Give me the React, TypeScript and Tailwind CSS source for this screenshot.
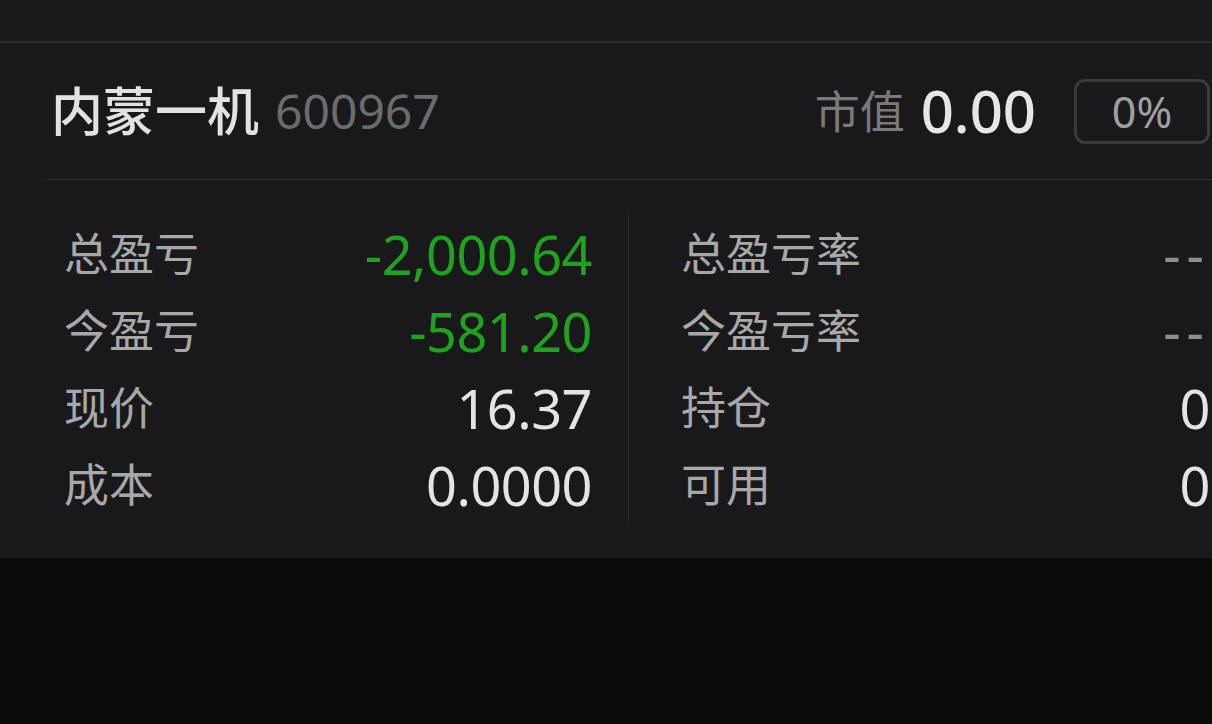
import React from "react";

const font = { fontFamily: '"Noto Sans", "Noto Sans CJK SC", sans-serif' };

type Row = { label: string; value: string; tone: "green" | "white" | "dim" };

const left: Row[] = [
  { label: "总盈亏", value: "-2,000.64", tone: "green" },
  { label: "今盈亏", value: "-581.20", tone: "green" },
  { label: "现价", value: "16.37", tone: "white" },
  { label: "成本", value: "0.0000", tone: "white" },
];

const right: Row[] = [
  { label: "总盈亏率", value: "--", tone: "dim" },
  { label: "今盈亏率", value: "--", tone: "dim" },
  { label: "持仓", value: "0", tone: "white" },
  { label: "可用", value: "0", tone: "white" },
];

const toneClass = {
  green: "text-[#1fa31f] tracking-[-0.5px]",
  white: "text-[#e4e4e4] tracking-[-0.5px]",
  dim: "text-[#8e8e8e] tracking-[6px]",
};

function StatRow({ row }: { row: Row }) {
  return (
    <div className="h-[77px] flex items-center justify-between">
      <span className="text-[45px] leading-none text-[#a8a8a8]">{row.label}</span>
      <span className={`text-[54px] leading-none ${toneClass[row.tone]}`}>{row.value}</span>
    </div>
  );
}

export default function App() {
  return (
    <div className="w-[1212px] h-[724px] bg-[#0b0b0b] overflow-hidden" style={font}>
      {/* top strip */}
      <div className="h-[43px] bg-[#19191b] border-b-2 border-[#2a2a2c]" />

      {/* position card */}
      <div className="h-[515px] bg-[#19191b] pl-[42px]">
        {/* header */}
        <div className="h-[137px] flex items-center justify-between pl-[9px] pr-[2px] border-b border-[#2c2c2e]">
          <div className="flex items-center gap-[16px]">
            <span className="text-[52px] leading-none text-[#e2e2e2] font-medium">内蒙一机</span>
            <span className="text-[48px] leading-none text-[#6c6c6c]">600967</span>
          </div>
          <div className="flex items-center">
            <span className="text-[45px] leading-none text-[#7a7a7a]">市值</span>
            <span className="ml-[16px] text-[58px] leading-none text-[#e6e6e6] font-medium">0.00</span>
            <div className="ml-[38px] w-[136px] h-[65px] border-[3px] border-[#3a3a3c] rounded-[11px] flex items-center justify-center">
              <span className="text-[43px] leading-none text-[#a0a0a0]">0%</span>
            </div>
          </div>
        </div>

        {/* stats */}
        <div className="flex py-[35px]">
          <div className="w-[586px] pl-[22px] pr-[36px]">
            {left.map((r) => (
              <StatRow key={r.label} row={r} />
            ))}
          </div>
          <div className="w-px bg-[#2c2c2e]" />
          <div className="flex-1 pl-[52px] pr-[2px]">
            {right.map((r) => (
              <StatRow key={r.label} row={r} />
            ))}
          </div>
        </div>
      </div>
    </div>
  );
}
